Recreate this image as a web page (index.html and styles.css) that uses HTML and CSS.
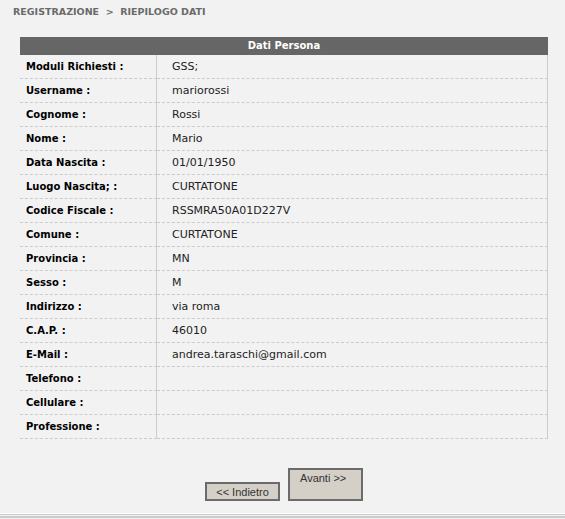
FILE: index.html
```html
<!DOCTYPE html>
<html>
<head>
<meta charset="utf-8">
<link rel="stylesheet" href="styles.css">
</head>
<body>
<div class="page">
  <div class="crumb">REGISTRAZIONE &nbsp;&gt;&nbsp; RIEPILOGO DATI</div>
  <table class="data">
    <thead>
      <tr><th colspan="2">Dati Persona</th></tr>
    </thead>
    <tbody>
      <tr><td class="lbl">Moduli Richiesti :</td><td class="val">GSS;</td></tr>
      <tr><td class="lbl">Username :</td><td class="val">mariorossi</td></tr>
      <tr><td class="lbl">Cognome :</td><td class="val">Rossi</td></tr>
      <tr><td class="lbl">Nome :</td><td class="val">Mario</td></tr>
      <tr><td class="lbl">Data Nascita :</td><td class="val">01/01/1950</td></tr>
      <tr><td class="lbl">Luogo Nascita; :</td><td class="val">CURTATONE</td></tr>
      <tr><td class="lbl">Codice Fiscale :</td><td class="val">RSSMRA50A01D227V</td></tr>
      <tr><td class="lbl">Comune :</td><td class="val">CURTATONE</td></tr>
      <tr><td class="lbl">Provincia :</td><td class="val">MN</td></tr>
      <tr><td class="lbl">Sesso :</td><td class="val">M</td></tr>
      <tr><td class="lbl">Indirizzo :</td><td class="val">via roma</td></tr>
      <tr><td class="lbl">C.A.P. :</td><td class="val">46010</td></tr>
      <tr><td class="lbl">E-Mail :</td><td class="val">andrea.taraschi@gmail.com</td></tr>
      <tr><td class="lbl">Telefono :</td><td class="val"></td></tr>
      <tr><td class="lbl">Cellulare :</td><td class="val"></td></tr>
      <tr><td class="lbl">Professione :</td><td class="val"></td></tr>
    </tbody>
  </table>
  <div class="actions">
    <button class="btn btn-back" type="button">&lt;&lt; Indietro</button>
    <button class="btn btn-next" type="button">Avanti &gt;&gt;</button>
  </div>
  <div class="rule"></div>
</div>
</body>
</html>
```
FILE: styles.css
```css
html, body {
  margin: 0;
  padding: 0;
  background: #f2f2f2;
}
.page {
  width: 565px;
  height: 519px;
  position: relative;
  font-family: "DejaVu Sans", Verdana, sans-serif;
}
.crumb {
  padding: 6px 0 0 13px;
  height: 37px;
  box-sizing: border-box;
  font-size: 9.5px;
  font-weight: bold;
  color: #6a6a6a;
  line-height: 12px;
}
.data {
  margin-left: 20px;
  width: 528px;
  border-collapse: separate;
  border-spacing: 0;
  font-size: 10px;
}
.data th {
  background: #666666;
  color: #ffffff;
  font-weight: bold;
  height: 18px;
  padding: 0;
  text-align: center;
  line-height: 18px;
}
.data td {
  height: 23px;
  padding: 0;
  border-bottom: 1px dashed #cccccc;
  border-right: 1px solid #cccccc;
  vertical-align: middle;
  line-height: 12px;
}
.data td.lbl {
  width: 130px;
  padding-left: 6px;
  font-weight: bold;
  color: #000000;
}
.data td.val {
  padding-left: 15px;
  font-size: 11px;
  color: #222222;
}
.actions {
  display: flex;
  justify-content: center;
  align-items: flex-end;
  gap: 8px;
  margin-top: 29px;
  padding-left: 3px;
}
.btn {
  margin: 0;
  width: 75px;
  background: #d4d0c8;
  border: 2px solid #6b6b6b;
  font-family: "Liberation Sans", Arial, sans-serif;
  font-size: 11px;
  color: #333333;
  padding: 0;
  box-sizing: border-box;
}
.btn-back {
  height: 19px;
  line-height: 14px;
  text-align: center;
}
.btn-next {
  height: 33px;
  text-align: left;
  padding-left: 10px;
  padding-bottom: 13px;
  line-height: 12px;
}
.rule {
  position: absolute;
  left: 0;
  right: 0;
  top: 513px;
  height: 1px;
  background: #ffffff;
  border-bottom: 1px solid #cccccc;
  box-shadow: 0 3px 0 #cccccc;
}
```
